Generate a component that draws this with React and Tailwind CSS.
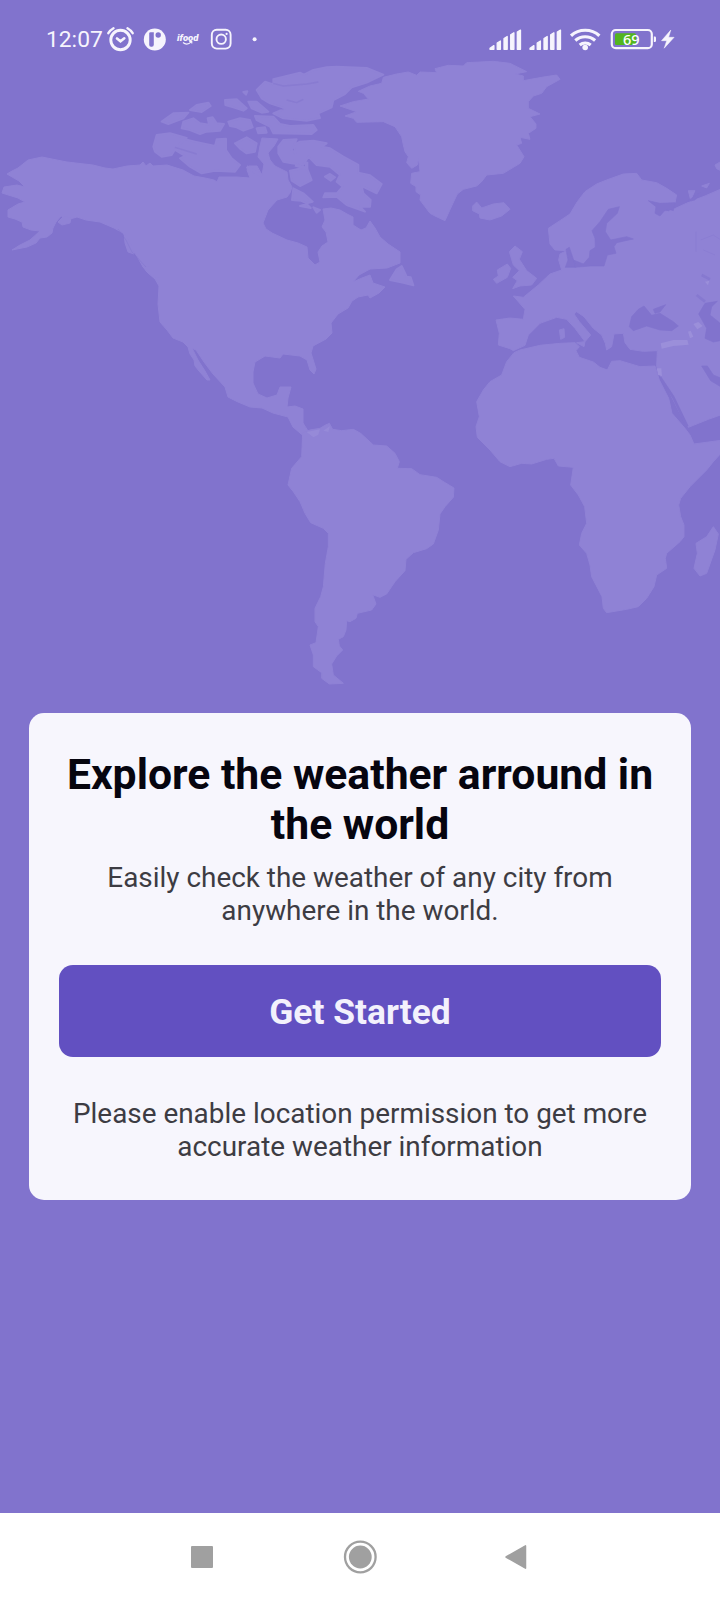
import React from "react";

const LAND = "#8f82d5";
const SEA = "#8173cd";
const WHITE = "#f6f4fd";

/* Decorative world map; each group has its own local grid at one third of a pixel. */
function WorldMap() {
  return (
    <svg
      className="absolute left-0 top-0 h-[700px] w-[720px] blur-[0.7px]"
      viewBox="0 0 720 700"
      fill={LAND}
      stroke={LAND}
      strokeWidth="1"
      strokeLinejoin="round"
      aria-hidden="true"
    >
      {/* North and Central America */}
      <path d="M7 174 12 171 18 168 28 160 42 157 67 162 93 165 105 168 113 169 127 166 140 165 143 162 146 166 150 163 153 166 167 165 183 170 194 176 205 178 214 180 217 182 219 177 237 177 250 178 247 170 249 166 257 166 262 175 264 164 258 157 260 146 262 138 278 139 274 146 268 153 270 160 275 166 287 172 288 180 292 187 290 193 287 197 277 200 268 210 263 223 266 229 272 233 287 240 298 243 307 247 308 258 315 265 320 262 318 252 322 246 328 242 326 232 322 227 325 220 323 209 331 208 340 210 347 214 353 217 353 225 361 230 366 228 370 221 375 228 380 237 388 244 400 252 400 263 387 268 370 269 359 275 353 282 362 278 370 275 373 283 385 287 379 293 370 298 368 295 358 297 352 301 348 308 338 314 331 323 332 333 326 339 313 346 311 353 316 369 314 374 310 370 307 360 300 356 283 354 280 358 265 356 255 362 253 372 253 383 258 394 267 398 277 395 280 387 291 387 288 398 287 407 295 406 303 409 303 423 308 431 315 431 305 437 300 433 293 427 288 417 273 413 262 408 250 407 238 402 228 397 225 387 213 374 204 362 196 350 192 348 198 360 205 371 210 380 207 380 199 371 195 366 194 360 190 354 188 347 183 342 173 338 167 330 160 322 158 304 159 286 155 279 148 273 143 267 138 258 133 250 130 243 123 233 114 228 100 222 86 220 77 217 70 219 61 216 56 222 53 228 52 233 47 237 40 238 36 243 27 247 12 250 20 245 30 240 40 231 31 230 23 227 22 222 15 219 8 217 8 210 18 204 25 202 18 198 2 193 4 187 17 185 25 187 19 181Z" />
      <path d="M58 222 64 216 71 218 70 223 62 225ZM124 232 131 244 134 254 128 252 125 243ZM143 266 150 267 161 278 155 277 147 272Z" />
      <path d="M118 229 126 240 132 252 146 267" fill="none" stroke={SEA} strokeWidth="0.8" opacity="0.6" />

      {/* Arctic islands */}
      <g transform="translate(140 50) scale(0.33333)" strokeWidth="6">
        <path d="M40 290 50 255 90 250 140 264 110 290 95 315 65 320 45 305ZM135 268 165 275 225 288 230 268 258 266 258 300 275 325 300 345 285 365 225 362 185 370 150 350 120 325 135 318 105 300 120 280ZM65 215 100 190 145 188 130 205 85 222ZM150 180 170 165 205 158 212 168 185 186ZM130 215 160 205 180 220 207 224 203 205 218 202 230 220 252 222 240 242 200 245 180 252 150 240 125 235ZM255 150 290 148 320 175 310 182 280 172 256 165ZM265 215 300 205 330 210 338 232 310 242 290 232 270 228ZM285 280 320 262 350 280 345 305 320 310 300 296ZM325 155 350 155 385 185 365 188 335 175ZM345 198 400 200 420 222 450 228 520 225 530 240 515 252 400 250 390 230 350 210ZM350 235 375 232 380 248 355 250ZM310 126 322 124 318 134Z" />
        <path d="M350 120 375 95 400 103 400 88 440 78 480 68 492 74 520 60 560 52 590 50 680 54 730 74 680 98 635 112 615 132 580 150 575 172 535 190 540 204 500 212 430 205 400 190 435 175 390 160 365 145Z" />
        <path d="M415 290 430 270 470 268 455 300 466 310 462 285 480 275 520 272 560 280 545 290 570 295 610 320 655 345 655 368 690 376 725 402 710 430 665 408 670 430 692 450 690 470 660 470 675 485 620 465 590 440 550 442 555 430 590 430 608 410 590 395 600 375 570 350 530 345 505 320 490 345 455 340 430 335 415 310ZM450 362 500 352 515 390 480 408 455 392ZM460 415 490 430 518 455 500 460 482 452 456 450ZM555 380 570 372 585 382 572 392ZM520 472 540 480 530 488ZM480 468 500 462 512 474ZM750 690 770 658 785 648 800 680 812 682 820 706 790 698Z" />
        <path d="M105 292 170 312M400 100 430 108 500 102 535 96M440 150 470 158 490 148M385 165 430 178" fill="none" stroke={SEA} strokeWidth="4" opacity="0.5" />
        <path d="M465 345 500 355 500 335M320 350 365 378" fill="none" strokeWidth="10" />
      </g>

      {/* Greenland, Iceland, British Isles */}
      <g transform="translate(320 50) scale(0.33333)" strokeWidth="3">
        <path d="M60 168 100 155 145 147 130 130 115 124 150 108 185 100 190 82 230 72 265 66 290 76 300 66 350 68 345 56 385 46 430 48 440 38 520 34 570 40 620 65 585 72 610 78 610 92 665 82 710 75 720 88 680 110 665 130 640 138 625 155 625 175 660 192 630 200 648 222 648 235 625 250 630 268 600 262 605 280 590 285 612 320 600 340 550 370 500 375 485 395 470 408 430 418 412 432 395 468 375 512 345 498 330 490 300 450 302 435 288 425 288 410 272 400 275 370 300 365 298 345 295 325 292 345 275 355 260 338 265 320 255 305 250 285 245 260 225 230 190 215 110 217 100 205 75 198 110 185Z" />
        <path d="M458 468 470 456 485 474 520 462 552 458 570 478 545 498 510 510 480 504 478 492 458 482ZM568 605 585 588 607 605 598 628 620 662 650 685 635 705 600 708 578 716 592 692 578 682 598 662 580 645ZM532 660 562 642 572 655 562 682 530 700 520 688 535 678Z" />
      </g>

      {/* Europe and the Middle East */}
      <g transform="translate(460 160) scale(0.33333)" strokeWidth="3">
        <path d="M160 408 190 412 235 375 270 342 305 330 296 300 300 282 320 272 285 270 270 252 265 205 300 182 330 162 352 125 375 95 410 72 440 60 490 42 530 40 545 60 590 68 620 85 650 105 645 128 600 132 590 150 625 155 640 148 690 125 735 108 790 84 790 762 745 778 685 802 660 760 630 700 605 655 590 620 592 572 550 574 510 568 495 548 490 520 462 522 455 560 440 570 436 550 425 525 400 505 372 470 350 455 342 462 358 485 392 525 375 545 345 505 320 478 290 472 240 490 205 525 195 556 160 572 150 566 115 555 118 520 108 480 150 474 190 478 195 448ZM298 510 312 506 314 532 302 538ZM765 15 790 0 790 36 770 26ZM685 92 705 92 692 120ZM725 78 748 70 740 84Z" />
        <path d="M350 548 375 545 372 560Z" />
        <g fill={SEA} stroke={SEA} strokeWidth="2">
          <path d="M445 148 478 140 472 160 440 190 436 215 452 240 500 230 520 237 470 248 462 260 468 280 442 285 432 318 390 318 345 322 340 300 370 312 388 292 390 272 406 262 405 235 396 212 420 185ZM318 268 328 262 345 312 345 322 316 322 324 300Z" />
          <path d="M508 500 515 470 535 448 552 438 575 466 600 460 640 485 655 498 635 512 600 510 560 498 520 512ZM580 448 617 434 600 456 585 460ZM716 462 735 430 772 424 755 440 750 465 775 485 790 500 790 540 760 546 735 535 740 505ZM725 618 742 618 760 645 785 655 785 682 752 662ZM565 122 600 130 645 128 640 152 620 145 600 168 585 160 588 140ZM680 125 720 98 705 120Z" />
          <path d="M710 405 735 425M725 345 750 358" fill="none" strokeWidth="8" opacity="0.6" />
          <path d="M600 652 640 712 682 800" fill="none" strokeWidth="8" />
        </g>
        <path d="M708 215 708 275M722 240 760 225 780 238M730 270 765 285" fill="none" stroke={SEA} strokeWidth="3" opacity="0.35" />
        <g fill="#9b8fda" stroke="none">
          <path d="M602 550 640 540 682 540 686 554 640 558 605 566ZM684 515 692 512 700 530 690 535ZM700 492 715 486 728 498 712 508ZM590 625 604 625 606 648 594 645ZM735 365 748 362 744 376Z" />
        </g>
      </g>

      {/* Africa and Madagascar */}
      <g transform="translate(440 320) scale(0.33333)" strokeWidth="3">
        <path d="M222 98 240 90 300 76 360 70 405 68 418 80 408 92 418 112 460 126 480 142 502 150 515 124 540 122 600 140 645 138 658 180 686 235 696 280 735 325 750 345 762 372 850 360 850 392 820 425 800 450 750 500 722 535 716 555 722 590 732 615 732 650 720 665 680 700 676 715 680 745 650 765 642 800 620 835 595 860 560 868 500 878 490 865 486 830 455 770 450 735 440 700 418 675 425 640 440 610 434 560 415 525 392 495 400 442 355 438 342 415 320 418 275 432 245 430 210 440 180 425 150 390 112 352 108 320 118 290 110 245 130 210 150 185 185 165 200 125ZM820 620 835 642 825 690 800 760 780 768 762 745 772 700 768 670 800 650Z" />
      </g>

      {/* South America */}
      <g transform="translate(270 400) scale(0.33333)" strokeWidth="3">
        <path d="M98 98 120 90 150 85 165 76 178 70 188 88 215 92 250 88 272 100 310 135 350 138 375 160 388 185 382 205 425 206 450 224 500 232 522 246 552 264 550 292 525 320 510 342 505 390 490 432 470 446 430 458 408 478 405 512 375 545 350 582 330 592 308 584 318 612 305 630 262 640 258 655 240 665 230 662 228 690 220 710 205 718 208 738 218 750 200 768 185 792 190 825 220 850 178 852 155 835 155 818 130 800 130 765 120 735 138 728 145 680 135 665 135 625 152 590 160 560 166 490 175 440 175 400 160 385 122 368 105 340 90 305 70 275 54 255 65 205 95 170Z" />
        <path d="M110 96 150 88 145 104 130 112ZM160 92 180 78 175 96Z" fill="#968ad8" stroke="none" />
      </g>
    </svg>
  );
}

function Signal() {
  return (
    <svg className="h-10 w-[33px]" viewBox="489 20 33 40" fill={WHITE} stroke={WHITE} strokeWidth="1.3" strokeLinejoin="round">
      <path d="M490 49.3v-.9l3.9-2.800v3.700ZM497.200 49.300v-6.300l3.200-2v8.300ZM504 49.300v-10.800l3.200-2v12.800ZM510.700 49.300v-14.500l3.200-2v16.500ZM517.300 49.300v-17.200l3.200-2v19.200Z" />
    </svg>
  );
}

function StatusBar() {
  return (
    <header className="relative flex h-20 items-start justify-between pl-[46px] pr-[44px] pt-5">
      <div className="flex">
        <span className="w-[60px] text-[22.8px] leading-[40px] text-[#f6f4fd]">12:07</span>
        <svg className="h-10 w-[30px]" viewBox="106 20 30 40" fill="none" stroke={WHITE} strokeLinecap="round">
          <circle cx="120.500" cy="40" r="9.700" strokeWidth="2.900" />
          <path d="M108.300 33.200c1.300-2.200 3-3.800 5.200-5M132.700 33.200c-1.300-2.200-3-3.800-5.200-5" strokeWidth="2.400" />
          <path d="m117 38.500 3.500 2.800 3.800-3" strokeWidth="2.600" />
        </svg>
        <svg className="ml-[7px] h-10 w-6" viewBox="143 20 24 40">
          <circle cx="154.800" cy="39.500" r="11" fill={WHITE} />
          <path d="M149.200 33.500q0-1.300 1.300-1.300h3.300v12.500q0 2-2 2h-.800q-1.800 0-1.800-2Z" fill={SEA} />
          <circle cx="158.200" cy="35" r="2.700" fill={SEA} />
        </svg>
        <svg className="ml-[9px] h-10 w-6" viewBox="176 20 24 40">
          <text x="177" y="40.500" fill={WHITE} fontFamily="Roboto, sans-serif" fontSize="9.500" fontWeight="900" fontStyle="italic" textLength="21.500" lengthAdjust="spacingAndGlyphs">
            ifood
          </text>
          <path d="M183 42.500q4 3.500 8.500-.8m-2.300-.2h2.600v2" fill="none" stroke={WHITE} strokeWidth="1.100" />
        </svg>
        <svg className="ml-[10px] h-10 w-[22px]" viewBox="210 20 22 40" fill="none" stroke={WHITE}>
          <rect x="211.800" y="29.800" width="18.800" height="18.800" rx="5" strokeWidth="1.900" />
          <circle cx="221.200" cy="39.200" r="4.700" strokeWidth="1.900" />
          <circle cx="226.600" cy="33.900" r="1.100" fill={WHITE} stroke="none" />
        </svg>
        <svg className="ml-[19px] h-10 w-2" viewBox="251 20 8 40">
          <circle cx="254.600" cy="39.300" r="2" fill={WHITE} />
        </svg>
      </div>
      <div className="flex">
        <Signal />
        <div className="w-[7px]" />
        <Signal />
        <svg className="ml-[7px] h-10 w-8" viewBox="569 20 32 40" fill="none" stroke={WHITE} strokeWidth="3.200">
          <path d="M571 35.700c8-7.300 20.400-7.300 28.400 0M575.300 40.500c5.700-5 14.100-5 19.800 0M579.700 45c3.300-2.600 7.700-2.600 11 0" />
          <circle cx="585.200" cy="47.500" r="2.800" fill={WHITE} stroke="none" />
        </svg>
        <svg className="ml-[9px] h-10 w-[47px]" viewBox="610 20 47 40">
          <rect x="611.800" y="30" width="40" height="18.200" rx="4" fill="none" stroke={WHITE} strokeWidth="2.200" />
          <rect x="615" y="33.200" width="21" height="11.800" rx="1.500" fill="#53b51f" />
          <path d="M653.800 36.500h1q1.200 0 1.200 1.200v3q0 1.200-1.200 1.200h-1Z" fill={WHITE} />
          <text x="631.300" y="45" textAnchor="middle" fill="#ffffff" fontFamily="'Noto Sans', sans-serif" fontSize="14.500" fontWeight="500">
            69
          </text>
        </svg>
        <svg className="ml-[3px] h-10 w-4" viewBox="660 20 16 40" fill={WHITE} stroke={WHITE} strokeWidth="0.500">
          <path d="M670.800 30 661.500 40.700h5.200l-2.500 7.500 9.900-10.900h-5.500Z" />
        </svg>
      </div>
    </header>
  );
}

function WelcomeCard() {
  return (
    <main className="relative mx-[29px] mt-[633px] flex h-[487px] flex-col items-center rounded-[15px] bg-[#f7f6fd] px-[30px] pt-[36px] text-center">
      <h1 className="whitespace-nowrap text-[42.7px] font-bold leading-[50px] text-[#06050f]">
        Explore the weather arround in
        <br />
        the world
      </h1>
      <p className="mt-[12px] whitespace-nowrap text-[27.9px] leading-[33px] text-[#3d3c43]">
        Easily check the weather of any city from
        <br />
        anywhere in the world.
      </p>
      <button className="mt-[37.5px] flex h-[92px] w-full shrink-0 items-center justify-center rounded-[14px] bg-[#6250c1] pt-1 text-[35.4px] font-bold text-[#f3f1fc]">
        Get Started
      </button>
      <p className="mt-[40.5px] whitespace-nowrap text-[27.9px] leading-[33px] text-[#3d3c43]">
        Please enable location permission to get more
        <br />
        accurate weather information
      </p>
    </main>
  );
}

function NavigationBar() {
  return (
    <nav className="relative mt-auto flex h-[87px] items-center bg-white pl-[191px]">
      <div className="h-[22px] w-[22px] rounded-[1px] bg-[#a0a0a0]" />
      <svg className="ml-[130px] h-[34px] w-[34px]" viewBox="0 0 34 34">
        <circle cx="17.300" cy="17" r="15.300" fill="none" stroke="#a0a0a0" strokeWidth="2.300" />
        <circle cx="17.300" cy="17" r="11.400" fill="#a0a0a0" />
      </svg>
      <svg className="ml-[127px] h-[26px] w-[24px]" viewBox="0 0 24 26">
        <path d="M2 13 21.500 1.800v22.400Z" fill="#a0a0a0" stroke="#a0a0a0" strokeWidth="1.500" strokeLinejoin="round" />
      </svg>
    </nav>
  );
}

export default function App() {
  return (
    <div className="relative flex h-[1600px] w-[720px] flex-col overflow-hidden bg-[#8173cd] font-[Roboto,sans-serif]">
      <WorldMap />
      <StatusBar />
      <WelcomeCard />
      <NavigationBar />
    </div>
  );
}
